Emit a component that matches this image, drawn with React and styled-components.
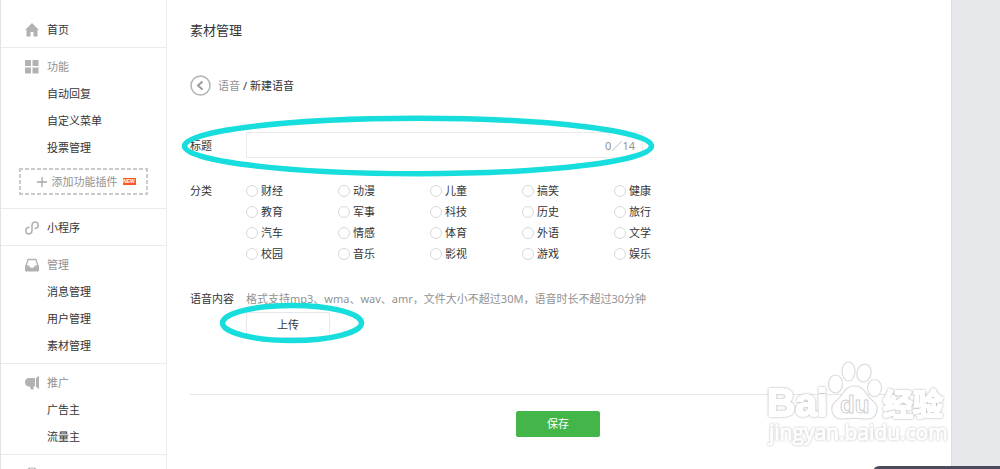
import { useState } from 'react';
import styled, { createGlobalStyle } from 'styled-components';

const GlobalStyle = createGlobalStyle`
	* {
		box-sizing: border-box;
	}

	body {
		margin: 0;
		background-color: #e7e8eb;
		color: #353535;
		font: 11px/27px 'Noto Sans', 'Noto Sans CJK SC', sans-serif;
		overflow: hidden;
	}

	input,
	button {
		font: inherit;
		color: inherit;
	}
`;

const Page = styled.div`
	position: relative;
	display: grid;
	grid-template-columns: 167px 1fr;
	min-height: 100vh;
	max-height: 100vh;
	margin-right: 48px;
	background-color: #fff;
	border-right: 1px solid #dcdde0;
	border-left: 1px solid #e2e2e2;
	overflow: hidden;
`;

const Sidebar = styled.nav`
	padding-top: 11px;
	border-right: 1px solid #ebebeb;
	margin-right: 1px;
`;

const Section = styled.section`
	padding: 5px 0 4px;
	border-bottom: 1px solid #ebebeb;
`;

const SectionTitle = styled.div`
	display: grid;
	grid-template-columns: 14px 1fr;
	align-items: center;
	gap: 8px;
	height: 27px;
	padding-left: 24px;
	color: ${props => (props.$muted ? '#929292' : 'inherit')};

	svg {
		display: block;
	}
`;

const MenuLink = styled.a`
	display: block;
	padding-left: ${props => (props.$top ? 0 : 46)}px;
	color: inherit;
	text-decoration: none;
`;

const PluginButton = styled.button`
	display: flex;
	align-items: center;
	justify-content: center;
	gap: 5px;
	width: 129px;
	height: 27px;
	margin: 7px 0 9px 18px;
	padding: 0 0 0 5px;
	border: 0;
	background:
		repeating-linear-gradient(90deg, #ccc 0 4px, transparent 4px 6px) top / 100% 2px no-repeat,
		repeating-linear-gradient(90deg, #ccc 0 4px, transparent 4px 6px) bottom / 100% 2px no-repeat,
		repeating-linear-gradient(#ccc 0 4px, transparent 4px 6px) left / 2px 100% no-repeat,
		repeating-linear-gradient(#ccc 0 4px, transparent 4px 6px) right / 2px 100% no-repeat;
	color: #929292;
`;

const NewBadge = styled.span`
	display: flex;
	align-items: center;
	justify-content: center;
	width: 13px;
	height: 7px;
	background-color: #ff5722;
	color: #fff;
	font: bold 5px/7px 'Liberation Sans', sans-serif;
`;

const Main = styled.main`
	padding: 17px 25px 0 22px;
`;

const Heading = styled.h2`
	margin: 0 0 28px;
	font-size: 13px;
	font-weight: 400;
	line-height: 27px;
`;

const Crumbs = styled.div`
	display: flex;
	align-items: center;
	gap: 3px;
	height: 27px;
	margin-bottom: 33px;
`;

const BackButton = styled.button`
	display: block;
	width: 21px;
	height: 21px;
	margin-right: 4px;
	padding: 0;
	border: 0;
	background: none;

	svg {
		display: block;
	}
`;

const CrumbLink = styled.a`
	color: #929292;
	text-decoration: none;
`;

const Field = styled.div`
	position: relative;
	display: grid;
	grid-template-columns: 56px 1fr;
	margin-bottom: ${props => props.$gap}px;
`;

const InputBox = styled.div`
	display: flex;
	align-items: center;
	width: 54%;
	min-width: 397px;
	height: 26px;
	padding: 0 7px;
	border: 1px solid #ebebeb;
`;

const TitleInput = styled.input`
	flex: 1;
	min-width: 0;
	height: 22px;
	padding: 0;
	border: 0;
	outline: 0;
	background: none;
`;

const Counter = styled.span`
	color: #929292;
`;

const RadioGrid = styled.div`
	display: grid;
	grid-template-columns: repeat(5, 92px);
`;

const RadioLabel = styled.label`
	display: flex;
	align-items: center;
	gap: 3px;
	height: 21px;
	line-height: 21px;
`;

const Radio = styled.input`
	appearance: none;
	width: 12px;
	height: 12px;
	margin: 0;
	border: 1px solid #d8d8d8;
	border-radius: 50%;

	&:checked {
		border: 4px solid #44b549;
	}
`;

const GroupLabel = styled.span`
	line-height: 21px;
`;

const Hint = styled.p`
	margin: 0;
	color: #929292;
`;

const Button = styled.button`
	display: block;
	width: 84px;
	height: 26px;
	padding: 0;
	border: 1px solid ${props => (props.$primary ? '#44b549' : '#e7e7eb')};
	border-radius: 2px;
	background-color: ${props => (props.$primary ? '#44b549' : '#fff')};
	color: ${props => (props.$primary ? '#fff' : 'inherit')};
	line-height: 24px;
`;

const Footer = styled.div`
	display: flex;
	justify-content: center;
	padding-top: 16px;
	border-top: 1px solid #e7e7eb;
`;

const Ring = styled.svg`
	position: absolute;
	left: ${props => props.$left}px;
	top: ${props => props.$top}px;
	pointer-events: none;
`;

const Watermark = styled.svg`
	position: absolute;
	right: 0;
	bottom: 17px;
	pointer-events: none;

	.glow {
		filter: drop-shadow(0 0 1px #aaa);
	}

	.faint {
		filter: drop-shadow(0 0 1px #bbb);
	}
`;

const ChatBar = styled.div`
	position: fixed;
	right: 0;
	bottom: 0;
	width: 126px;
	height: 3px;
	border-top-left-radius: 6px 3px;
	background-color: #4a4c5b;
`;

const icons = {
	home: <path d='M7 0 0 7h1.500v6.500h4V9h3v4.500h4V7H14z' fill='#b2b2b2' />,
	grid: <path d='M0 0H6V6H0zM7.500 0h6V6h-6zM0 7.500H6v6H0zM7.500 7.500h6v6h-6z' fill='#b2b2b2' />,
	mini: (
		<path
			d='M3.900 6.300C2 6.500.9 7.700.9 9.500c0 2 1.400 3.400 3.100 3.400S7 11.400 7 9.600V4.400C7 2.600 8.300 1 10 1s3.200 1.300 3.200 3.200c0 1.800-1.200 3-3.100 3.300'
			fill='none'
			stroke='#b2b2b2'
			strokeWidth='1.600'
			strokeLinecap='round'
		/>
	),
	inbox: (
		<>
			<path d='M1 8 3 1.500h8L13 8' fill='none' stroke='#b2b2b2' strokeWidth='1.300' strokeLinejoin='round' />
			<path d='M0 7.500h4.200c.2 1.600 1.300 2.500 2.800 2.500s2.600-.9 2.800-2.500H14v5q0 1-1 1H1q-1 0-1-1z' fill='#b2b2b2' />
		</>
	),
	horn: (
		<path
			d='M4 2h6v8.500H8.500v3H6L4.800 10.500H4C1.500 10.500 0 8.800 0 6.300S1.500 2 4 2zM11 1.800 14 0v13l-3-2.200z'
			fill='#b2b2b2'
		/>
	),
	gear: (
		<path
			d='M5.500.2v4h1V0h1v4.200h1v-4C11.500.9 13.500 3.600 13.500 6.700a6.500 6.500 0 0 1-13 0C.500 3.600 2.500.9 5.500.2z'
			fill='#b2b2b2'
		/>
	),
};

const menu = [
	{ title: '首页', icon: 'home', link: true },
	{ title: '功能', icon: 'grid', items: ['自动回复', '自定义菜单', '投票管理'], plugin: true },
	{ title: '小程序', icon: 'mini', link: true },
	{ title: '管理', icon: 'inbox', items: ['消息管理', '用户管理', '素材管理'] },
	{ title: '推广', icon: 'horn', items: ['广告主', '流量主'] },
	{ title: '', icon: 'gear' },
];

const categories = [
	'财经', '动漫', '儿童', '搞笑', '健康',
	'教育', '军事', '科技', '历史', '旅行',
	'汽车', '情感', '体育', '外语', '文学',
	'校园', '音乐', '影视', '游戏', '娱乐',
];

const Icon = ({ name }) => (
	<svg width='14' height='14' viewBox='0 0 14 14'>
		{icons[name]}
	</svg>
);

const MenuSection = ({ title, icon, link, items = [], plugin }) => (
	<Section>
		<SectionTitle $muted={!link}>
			<Icon name={icon} />
			{link ? <MenuLink href='#' $top>{title}</MenuLink> : <span>{title}</span>}
		</SectionTitle>
		{items.map(item => (
			<MenuLink href='#' key={item}>{item}</MenuLink>
		))}
		{plugin && (
			<PluginButton>
				<svg width='10' height='10' viewBox='0 0 10 10'>
					<path d='M5 0v10M0 5h10' stroke='#a8a8a8' strokeWidth='1.300' />
				</svg>
				<span>添加功能插件</span>
				<NewBadge>NEW</NewBadge>
			</PluginButton>
		)}
	</Section>
);

const App = () => {
	const [title, setTitle] = useState('');

	return (
		<>
			<GlobalStyle />
			<Page>
				<Sidebar>
					{menu.map(section => (
						<MenuSection key={section.icon} {...section} />
					))}
				</Sidebar>
				<Main>
					<Heading>素材管理</Heading>
					<Crumbs>
						<BackButton aria-label='返回'>
							<svg width='21' height='21' viewBox='0 0 21 21' fill='none' stroke='#b2b2b2'>
								<circle cx='10.500' cy='10.500' r='9.500' strokeWidth='1.500' />
								<path d='M12.500 6.500 8 10.500l4.500 4' stroke='#9a9a9a' strokeWidth='2' />
							</svg>
						</BackButton>
						<CrumbLink href='#'>语音</CrumbLink>
						<span>/</span>
						<span>新建语音</span>
					</Crumbs>

					<Field $gap={21}>
						<label htmlFor='title'>标题</label>
						<InputBox>
							<TitleInput id='title' maxLength={14} value={title} onChange={e => setTitle(e.target.value)} />
							<Counter>{title.length}／14</Counter>
						</InputBox>
						<Ring width='474' height='62' $left={-9} $top={-17}>
							<ellipse cx='237' cy='31' rx='233.500' ry='27.700' fill='none' stroke='#17dddd' strokeWidth='5.500' />
						</Ring>
					</Field>

					<Field $gap={21} role='radiogroup' aria-labelledby='category'>
						<GroupLabel id='category'>分类</GroupLabel>
						<RadioGrid>
							{categories.map(name => (
								<RadioLabel key={name}>
									<Radio type='radio' name='category' value={name} />
									{name}
								</RadioLabel>
							))}
						</RadioGrid>
					</Field>

					<Field $gap={56}>
						<span>语音内容</span>
						<div>
							<Hint>格式支持mp3、wma、wav、amr，文件大小不超过30M，语音时长不超过30分钟</Hint>
							<Button>上传</Button>
						</div>
						<Ring width='146' height='42' $left={29} $top={17}>
							<ellipse cx='73' cy='21' rx='69.500' ry='17.500' fill='none' stroke='#17dddd' strokeWidth='5.500' />
						</Ring>
					</Field>

					<Footer>
						<Button $primary>保存</Button>
					</Footer>
				</Main>

				<Watermark width='185' height='94' viewBox='0 0 185 94' fill='#fff' stroke='#fff' strokeWidth='2' strokeLinejoin='round'>
					<g className='glow' fontFamily='Liberation Sans, Noto Sans CJK SC, sans-serif' fontWeight='700'>
						<text x='1' y='58' fontSize='39'>Bai</text>
						<text x='117' y='57' fontSize='30'>经验</text>
					</g>
					<g stroke='#dcdcdc' strokeWidth='1.200'>
						<ellipse cx='69.500' cy='26' rx='7' ry='9' />
						<ellipse cx='82.500' cy='13.500' rx='6.500' ry='9.500' />
						<ellipse cx='98' cy='15' rx='7' ry='9' transform='rotate(12 98 15)' />
						<ellipse cx='108.500' cy='30' rx='7' ry='8.500' />
						<path d='M88.500 28C78 28 77 38 70 43c-8 6-4 19 7 18 8-1 15-1 23 0 11 1 15-12 7-18C99 37 99 28 88.500 28z' />
					</g>
					<text x='74' y='55' fontSize='24' fontWeight='700' fontFamily='Liberation Sans, sans-serif' stroke='#d0d0d0' strokeWidth='1'>du</text>
					<text className='faint' x='3' y='82' fontSize='21' fontFamily='Open Sans, sans-serif' strokeWidth='1'>jingyan.baidu.com</text>
				</Watermark>
			</Page>
			<ChatBar />
		</>
	);
};

export default App;
